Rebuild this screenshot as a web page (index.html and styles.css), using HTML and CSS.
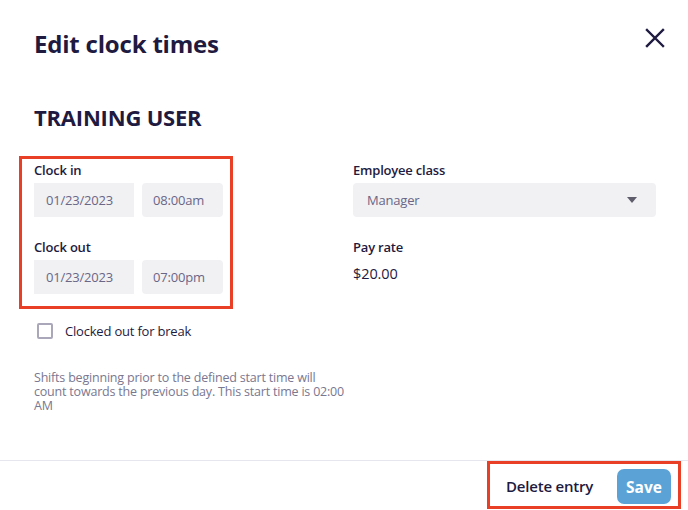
FILE: index.html
```html
<!DOCTYPE html>
<html>
<head>
<meta charset="utf-8">
<link rel="stylesheet" href="styles.css">
</head>
<body>
<div class="dialog">
  <div class="main">
    <div class="header">
      <h1 class="title">Edit clock times</h1>
      <button class="close" aria-label="Close">
        <svg width="20" height="20" viewBox="0 0 20 20"><path d="M2 2 L18 18 M18 2 L2 18" stroke="#1f1a40" stroke-width="2.4" stroke-linecap="square" fill="none"/></svg>
      </button>
    </div>
    <h2 class="user">TRAINING USER</h2>
    <div class="grid">
      <div class="col">
        <div class="group">
          <div class="field">
            <div class="label">Clock in</div>
            <div class="pair">
              <div class="input date">01/23/2023</div>
              <div class="input time">08:00am</div>
            </div>
          </div>
          <div class="field">
            <div class="label">Clock out</div>
            <div class="pair">
              <div class="input date">01/23/2023</div>
              <div class="input time">07:00pm</div>
            </div>
          </div>
          <div class="mark"></div>
        </div>
      </div>
      <div class="col">
        <div class="field">
          <div class="label">Employee class</div>
          <div class="input select">
            <span>Manager</span>
            <svg width="10" height="6" viewBox="0 0 10 6"><path d="M0 0 L10 0 L5 6 Z" fill="#5f5d6b"/></svg>
          </div>
        </div>
        <div class="field">
          <div class="label">Pay rate</div>
          <div class="value">$20.00</div>
        </div>
      </div>
    </div>
    <label class="check">
      <span class="box"></span>
      <span>Clocked out for break</span>
    </label>
    <p class="note">Shifts beginning prior to the defined start time will count towards the previous day. This start time is 02:00 AM</p>
  </div>
  <div class="footer">
    <div class="actions">
      <button class="delete">Delete entry</button>
      <button class="save">Save</button>
    </div>
  </div>
</div>
</body>
</html>
```
FILE: styles.css
```css
* { box-sizing: border-box; }
html, body { margin: 0; padding: 0; }
body {
  font-family: "Open Sans", "Noto Sans", sans-serif;
  color: #1f1a40;
  background: #fff;
  width: 688px;
  height: 510px;
  overflow: hidden;
}
.dialog {
  height: 510px;
  display: flex;
  flex-direction: column;
}
.main {
  flex: 1;
  padding: 0 32px 0 34px;
}
.header {
  display: flex;
  justify-content: space-between;
  align-items: flex-start;
  padding-top: 28px;
}
.title {
  margin: 0;
  font-size: 24px;
  line-height: 32px;
  font-weight: 700;
  letter-spacing: -0.2px;
}
.close {
  border: 0;
  background: none;
  padding: 0;
  margin-right: -9px;
  width: 20px;
  height: 20px;
  cursor: pointer;
}
.user {
  margin: 42px 0 0 0;
  font-size: 22px;
  line-height: 30px;
  font-weight: 700;
  letter-spacing: -0.2px;
}
.grid {
  display: grid;
  grid-template-columns: 303px 303px;
  column-gap: 16px;
  margin-top: 28px;
}
.col {
  display: flex;
  flex-direction: column;
  gap: 20px;
}
.group {
  position: relative;
  display: flex;
  flex-direction: column;
  gap: 20px;
}
.mark {
  position: absolute;
  left: -15px;
  top: -4px;
  width: 214px;
  height: 153px;
  border: 3px solid #ea3f27;
  pointer-events: none;
}
.label {
  font-size: 13px;
  line-height: 20px;
  font-weight: 600;
  letter-spacing: -0.2px;
  margin-bottom: 3px;
}
.pair {
  display: flex;
  gap: 8px;
}
.input {
  height: 34px;
  background: #f1f1f4;
  border-radius: 4px;
  font-size: 13px;
  letter-spacing: -0.2px;
  color: #6a6686;
  display: flex;
  align-items: center;
}
.date { width: 100px; padding-left: 12px; border-radius: 0; }
.time { width: 81px; padding-left: 11px; }
.select {
  justify-content: space-between;
  padding: 0 19px 0 14px;
}
.value {
  font-size: 14.5px;
  line-height: 20px;
  margin-top: 7px;
  letter-spacing: -0.1px;
}
.check {
  display: flex;
  align-items: center;
  gap: 12px;
  margin-top: 27px;
  margin-left: 3px;
  font-size: 13px;
  letter-spacing: -0.2px;
  line-height: 20px;
}
.box {
  width: 16px;
  height: 16px;
  border: 2px solid #a9a7b9;
  border-radius: 2px;
  background: #fff;
}
.note {
  margin: 30px 0 0 0;
  width: 314px;
  font-size: 12.5px;
  letter-spacing: -0.2px;
  line-height: 14px;
  color: #7a7790;
}
.footer {
  height: 50px;
  border-top: 1px solid #e6e6ee;
  display: flex;
  justify-content: flex-end;
  padding-right: 7px;
}
.actions {
  width: 194px;
  height: 48px;
  border: 3px solid #ea3f27;
  display: flex;
  justify-content: space-between;
  align-items: flex-start;
  padding: 5px 7px 0 16px;
}
.delete {
  border: 0;
  background: none;
  font-family: inherit;
  font-size: 15px;
  letter-spacing: -0.2px;
  font-weight: 600;
  color: #1f1a40;
  padding: 0;
  height: 34px;
}
.save {
  border: 0;
  background: #5ba3d6;
  color: #fff;
  font-family: inherit;
  font-size: 15.5px;
  font-weight: 700;
  border-radius: 7px;
  width: 54px;
  height: 35px;
  padding: 0;
}
```
